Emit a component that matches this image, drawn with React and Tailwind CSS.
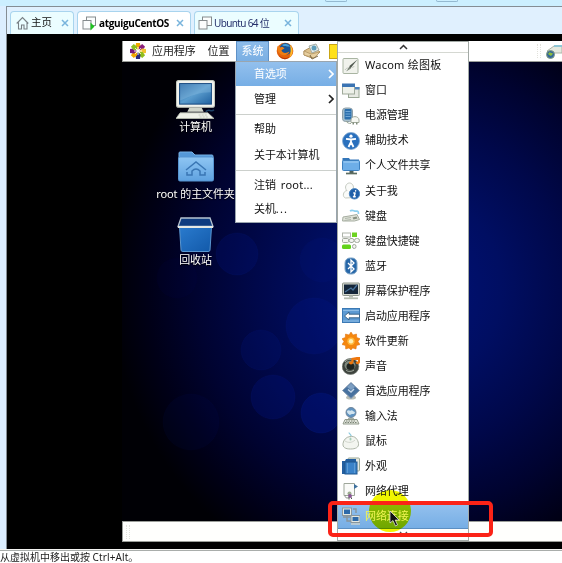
import React from "react";

const Svg = ({ children, w = 18, h = 18, className = "" }) => (
  <svg width={w} height={h} viewBox={`0 0 ${w} ${h}`} className={`shrink-0 ${className}`}>
    {children}
  </svg>
);

const icons = {
  wacom: (
    <>
      <rect x="1" y="1.500" width="15" height="15" rx="1" fill="#f0f2ec" stroke="#a9b5a2" />
      <path d="M3 13c2-3 3-1 5-3 2-1 3 2 4-1" fill="none" stroke="#bcc2b8" />
      <path d="M15.500 2.500 9.500 10 5.500 13.500 8 8.500z" fill="#4e574e" />
      <path d="M4 14.500 7.500 10l1.500 1.500z" fill="#7c867a" />
    </>
  ),
  windows: (
    <>
      <rect x="6.500" y="5.500" width="10.500" height="10" fill="#e6e9e2" stroke="#9aa794" />
      <rect x="12.500" y="5" width="5" height="2.500" fill="#4a82bd" />
      <rect x="0.500" y="2.500" width="12" height="9.500" fill="#eef1ea" stroke="#a0aa9b" />
      <rect x="0" y="1.500" width="13" height="3.500" fill="#3a73b2" />
    </>
  ),
  power: (
    <>
      <rect x="0.500" y="1" width="10" height="13.500" rx="3" fill="#a9c0cb" stroke="#8d9ea8" />
      <rect x="2.500" y="2" width="7" height="10.500" rx="1" fill="#2d70ad" />
      <path d="M3.500 4.500h5M3.500 7h5M3.500 9.500h5" stroke="#6fa6d5" />
      <path d="M9 15.500V13c0-4.500 8-4.500 8 0v2.500z" fill="#f5f7f2" stroke="#a3ab9d" />
      <path d="M10.500 16.500h1.500M14 16.500h1.500" stroke="#7f8b7a" strokeWidth="2" />
      <path d="M4 14c1 2 3 2.500 5 2.500" fill="none" stroke="#9aa795" />
    </>
  ),
  access: (
    <>
      <circle cx="9" cy="9" r="8.500" fill="#2a70bd" stroke="#7ea6cf" strokeWidth="0.800" />
      <circle cx="9" cy="4.200" r="1.600" fill="#fff" />
      <path d="M4 6.800 9 7.500l5-.7M9 7v4M9 10l-2.500 5M9 10l2.500 5" stroke="#fff" strokeWidth="1.800" fill="none" />
    </>
  ),
  share: (
    <>
      <path d="M0.500 1h6.500l1 1.500h9V12h-16.500z" fill="#3476b9" />
      <rect x="0.500" y="3.500" width="17" height="10" rx="1" fill="#6daee8" stroke="#3d80bf" />
      <path d="M1.500 5h15" stroke="#a8d2f5" />
      <path d="M7.500 14h4v2h-4z" fill="#4f625c" />
      <path d="M4 16.500h11" stroke="#5d6d61" strokeWidth="1.700" />
    </>
  ),
  about: (
    <>
      <path d="M3.500 16C0 15 1 9 5 8.500 2 6 4 1 7.500 1S13 6 10 8.500c3 1 4 4 3 7z" fill="#fafbf9" stroke="#c6cbc2" />
      <circle cx="12.500" cy="11.800" r="5.200" fill="#1f5fa9" stroke="#4a84bf" />
      <path d="M13.600 8.800v.100M13 11l-.8 3.700M11.800 11H13M11.500 14.700h1.700" stroke="#fff" strokeWidth="1.500" strokeLinecap="round" />
    </>
  ),
  keyboard: (
    <>
      <path d="M8 4c3-2 4 1 7 0 1 0 1.500 1 1.500 3" fill="none" stroke="#8cd0f0" strokeWidth="1.700" />
      <path d="m1 10 5-.8 9-1.700 2.500 5-5 1.500H.5z" fill="#e0e4da" stroke="#a6ada0" />
      <path d="m3 11.500 6-1M2.500 13.500 9 12.500" stroke="#b0b7ab" />
      <path d="m10.500 10.500 4-1 1 2-4 1z" fill="#879082" />
    </>
  ),
  shortcuts: (
    <>
      <rect x="0.500" y="1" width="8" height="4" fill="#fff" stroke="#aeb4aa" />
      <rect x="10" y="0.500" width="5" height="4.500" fill="#6dd321" />
      <rect x="0.500" y="6.500" width="6" height="4" rx="1" fill="#f3f4f1" stroke="#a2a99c" />
      <rect x="7" y="6.500" width="5" height="4" rx="2" fill="#f3f4f1" stroke="#a2a99c" />
      <rect x="12.500" y="6.500" width="5" height="4" rx="2" fill="#f3f4f1" stroke="#a2a99c" />
      <rect x="0" y="12.500" width="9" height="4.500" rx="1.500" fill="#62d31b" />
      <rect x="10.500" y="12.500" width="3.500" height="4" rx="1.700" fill="#f3f4f1" stroke="#a2a99c" />
    </>
  ),
  bluetooth: (
    <>
      <rect x="3" y="1" width="12" height="16" rx="5" fill="#2767a8" stroke="#7fa6c9" />
      <path d="m6 6 6 6-3 3V3l3 3-6 6" fill="none" stroke="#fff" strokeWidth="1.300" />
    </>
  ),
  screensaver: (
    <>
      <rect x="0.500" y="1" width="17" height="12.500" rx="1" fill="#d3d7cf" stroke="#8f968c" />
      <rect x="2" y="2.500" width="14" height="9.500" fill="#152639" />
      <path d="m3 10 6-4 2 2 4-5" fill="none" stroke="#47729b" strokeWidth="1.300" />
      <path d="M7 13.500h4v2H7z" fill="#b7bdb2" />
      <path d="M2 16.300h14" stroke="#b6bdb1" strokeWidth="1.800" />
    </>
  ),
  startup: (
    <>
      <rect x="0.500" y="1.500" width="17" height="14" fill="#5c9ad3" stroke="#3b79b4" />
      <path d="M1 3.500h16M1 14h16" stroke="#8dbce5" />
      <path d="M2.500 9 7 5v2.200h10.500v3.600H7V13z" fill="#fff" stroke="#315b80" strokeWidth="0.900" />
    </>
  ),
  update: (
    <>
      <path d="m9 0 2 3 3.500-1 .2 3.500 3.300 1.200L16 9.500l2 3-3.500 1L14 17l-3.300-1L9 18l-2-2-3.300 1-.2-3.500L0 12.500l2-3-2-2.800 3.300-1.200L3.500 2 7 3z" fill="#f5880f" stroke="#dd6d08" strokeWidth="0.500" />
      <circle cx="9" cy="9.300" r="3.700" fill="#ffb83c" />
      <circle cx="9" cy="9.300" r="2.200" fill="#fff0b4" />
    </>
  ),
  sound: (
    <>
      <ellipse cx="8.500" cy="9.500" rx="8.300" ry="8" fill="#3d423d" stroke="#757c74" strokeWidth="0.700" />
      <ellipse cx="8" cy="8.500" rx="5.500" ry="4.800" fill="#7d877c" />
      <ellipse cx="8.500" cy="9.500" rx="4" ry="3.600" fill="#1f2420" />
      <path d="M3 5c2-3 5-3 7-2M4 13c2 2 5 2 8 0" fill="none" stroke="#a5aea2" />
      <path d="M10.500 5.500V2L17 .7v5" fill="none" stroke="#ee760c" strokeWidth="2.200" />
      <ellipse cx="9" cy="6" rx="2" ry="1.400" fill="#ee760c" />
      <ellipse cx="15.700" cy="5.800" rx="2" ry="1.400" fill="#ee760c" />
    </>
  ),
  preferred: (
    <>
      <ellipse cx="9" cy="15.500" rx="5" ry="2" fill="#b8bdb6" />
      <path d="M9 .5 17.500 8.500 9 16.500.5 8.500z" fill="#47719f" stroke="#8b9eb4" />
      <path d="m5 5 4-3.500L13 5 9 8z" fill="#7d9fc2" />
      <path d="m6 7.500 3 2.500 3-3" fill="none" stroke="#c3d5e8" strokeWidth="1.500" />
    </>
  ),
  input: (
    <>
      <circle cx="9" cy="5.500" r="5" fill="#5f93c1" stroke="#72879b" />
      <path d="M5 4c2-2 3 1 5-1 1 2 3 1 3 3-2 2-3 0-5 2-1-1-3-1-3-4z" fill="#d1e4ef" />
      <path d="M6 11h6v2H6z" fill="#a6b1a9" />
      <path d="M3 12.500h12l2 4.500H1z" fill="#e2e5dc" stroke="#929b8d" />
      <path d="M4 14h10M3 15.500h12" stroke="#7a8477" strokeDasharray="1.500 1" />
    </>
  ),
  mouse: (
    <>
      <path d="M7 0.500c0 2 3 1 2 5" fill="none" stroke="#8bcbe0" strokeWidth="1.200" />
      <path d="M8 4.500c5-1 8 3 8.500 7 .5 4-3 5.500-8 5.500S.5 15.500 1 11.500C1.500 8 4 5 8 4.500z" fill="#f3f5f0" stroke="#aeb6a8" />
      <path d="M3 9c3 2 7 2 10-1" fill="none" stroke="#d1d5cd" />
      <ellipse cx="8.500" cy="7" rx="1" ry="1.500" fill="#a5cdb9" />
    </>
  ),
  appearance: (
    <>
      <rect x="6" y="1" width="11.500" height="13" rx="1" fill="#e5e8e1" stroke="#9aa795" />
      <path d="M0 4h3l1-2h10v3H4v12H0z" fill="#235e9f" />
      <rect x="3" y="5" width="12" height="12" fill="#3a82c9" stroke="#1f568f" />
      <path d="M5.500 6v10M12.500 6v10" stroke="#5e9bd4" />
    </>
  ),
  proxy: (
    <>
      <path d="M2 1.500h10.500v12H2z" fill="#fafbf9" stroke="#9fa79b" />
      <path d="M12 2 16 4.500 12 7z" fill="#3e719e" />
      <path d="M4 13c-3 3 3 4 3 2" fill="none" stroke="#8c9489" />
      <circle cx="7.500" cy="11.500" r="2" fill="#9dad92" />
      <circle cx="8" cy="14" r="1.900" fill="#8a5596" />
      <path d="M7 15.500v2M9.500 15.500v1.500" stroke="#535a51" />
    </>
  ),
  network: (
    <>
      <rect x="0.500" y="1" width="9" height="7.500" fill="#e3e8e2" stroke="#8a969c" />
      <rect x="2" y="2.500" width="6" height="4.500" fill="#2e6aa9" />
      <path d="M1 10h8M5 9v5h4M11 2h3v4" fill="none" stroke="#88949a" strokeWidth="1.400" />
      <rect x="9" y="8.500" width="9" height="7" fill="#e3e8e2" stroke="#8a969c" />
      <rect x="10.500" y="10" width="6" height="4" fill="#2e6aa9" />
      <path d="M9 17h9" stroke="#c9d0ce" strokeWidth="1.500" />
    </>
  ),
};

const prefs = [
  ["wacom", "Wacom 绘图板"],
  ["windows", "窗口"],
  ["power", "电源管理"],
  ["access", "辅助技术"],
  ["share", "个人文件共享"],
  ["about", "关于我"],
  ["keyboard", "键盘"],
  ["shortcuts", "键盘快捷键"],
  ["bluetooth", "蓝牙"],
  ["screensaver", "屏幕保护程序"],
  ["startup", "启动应用程序"],
  ["update", "软件更新"],
  ["sound", "声音"],
  ["preferred", "首选应用程序"],
  ["input", "输入法"],
  ["mouse", "鼠标"],
  ["appearance", "外观"],
  ["proxy", "网络代理"],
  ["network", "网络连接"],
];

const VmIcon = ({ running }) => (
  <Svg w={15} h={15}>
    <rect x="4.500" y="1" width="9" height="8.500" fill="#fbfdfd" stroke="#858b8d" />
    <rect x="1" y="4.500" width="8" height="8.500" fill="#fbfdfd" stroke="#858b8d" />
    {running && <path d="M8.500 6.500v8l4-4z" fill="#1fc31f" />}
  </Svg>
);

const TabClose = ({ className = "" }) => (
  <Svg w={8} h={8} className={className}>
    <path d="m1 1 6 6M7 1 1 7" stroke="#78b4dc" strokeWidth="1.500" />
  </Svg>
);

const petals = [
  ["#f2a900", 0],
  ["#8a1f7c", 45],
  ["#f2c230", 90],
  ["#8fbe1d", 135],
  ["#2b2a7c", 180],
  ["#f2a900", 225],
  ["#7a1a7c", 270],
  ["#8fbe1d", 315],
];

const Gnome = () => (
  <Svg w={18} h={18}>
    {petals.map(([c, a]) => (
      <path key={a} d="M9 8 6.500 5 7 1h4l.5 4z" fill={c} transform={`rotate(${a} 9 9)`} />
    ))}
    <path d="M9 5v8M5 9h8M6.200 6.200l5.600 5.600M11.800 6.200l-5.600 5.600" stroke="#fff" strokeWidth="0.900" />
  </Svg>
);

const Firefox = () => (
  <Svg w={18} h={18}>
    <circle cx="9" cy="9" r="8.300" fill="#e4630c" />
    <circle cx="9.500" cy="7" r="6" fill="#1c5595" />
    <path d="M6 3c3-2 7-1 8 2-2-1-3 0-4-1-2 0-3 0-4-1z" fill="#4ba2da" />
    <path d="M1.500 4c1 0 2 1 3 1.500 2-1 3 0 4 1-1 1-3 1-3 2 1 3 5 3 8 1-1 3-4 4.500-7 3.500C3 12 .5 8 1.500 4z" fill="#ef7e13" />
    <path d="M14 3c4 4 3 10-1 13 2-4 2-8 1-13z" fill="#ffbe2a" />
    <path d="M2 12c3 5 9 5 12 2-2 4-9 5-12-2z" fill="#b83808" />
  </Svg>
);

const Mail = () => (
  <Svg w={20} h={17}>
    <path d="m2 8 9-5 7 6-8 6-8-3z" fill="#ddc18b" stroke="#ad8f5d" />
    <path d="m7 3 7-2 3 6-7 3z" fill="#e8ede9" stroke="#a3aaa3" />
    <circle cx="12" cy="5" r="2.500" fill="#5f9dba" />
    <path d="m2 8 7 3 9-2-6 6-10-3z" fill="#e7cf9f" stroke="#b39664" strokeWidth="0.800" />
    <path d="m8 12 2 4 6-3" fill="none" stroke="#7b6642" />
  </Svg>
);

const Computer = () => (
  <svg width="39" height="39" viewBox="0 0 38 38" preserveAspectRatio="none" className="shrink-0">
    <defs>
      <linearGradient id="scr" x1="0" y1="0" x2="1" y2="1">
        <stop offset="0" stopColor="#1d5c9c" />
        <stop offset="0.500" stopColor="#5b9dce" />
        <stop offset="1" stopColor="#1f609f" />
      </linearGradient>
    </defs>
    <rect x="0.500" y="0.500" width="37" height="26" rx="2" fill="#f2f3ee" stroke="#c3c8bd" />
    <rect x="3.500" y="3.500" width="31" height="20" fill="url(#scr)" stroke="#1a4b80" />
    <path d="M4 4h30v8c-12 0-18 3-30 8z" fill="#8fc0e3" opacity="0.350" />
    <path d="M13 27h12l2 4H11z" fill="#d2d6cb" />
    <path d="M4 32h27l6 5.500H0z" fill="#eff1e9" stroke="#b8beb0" strokeWidth="0.800" />
    <path d="M22 34h8M23 36h8" stroke="#c6cbbf" strokeDasharray="2 1" />
    <path d="M29 31c3-4 5 1 8-2" fill="none" stroke="#1d4166" strokeWidth="1.500" />
  </svg>
);

const Home = () => (
  <svg width="36" height="31" viewBox="0 0 36 31" className="shrink-0">
    <defs>
      <linearGradient id="fold" x1="0" y1="0" x2="0" y2="1">
        <stop offset="0" stopColor="#8fc6f3" />
        <stop offset="1" stopColor="#5fa2e0" />
      </linearGradient>
    </defs>
    <path d="M1 7V2q0-1 1-1h12l3 3h17q1 0 1 1v6H1z" fill="#5598d8" stroke="#77b1e5" />
    <rect x="0.500" y="6" width="35" height="24" rx="1.500" fill="url(#fold)" stroke="#5795d2" />
    <path d="m8 19 10-8 10 8M9 21v3h5v-4q4-4 8 0v4h5v-3" fill="none" stroke="#3a76b4" strokeWidth="1.500" />
  </svg>
);

const Trash = () => (
  <svg width="37" height="35" viewBox="0 0 37 35" className="shrink-0">
    <defs>
      <linearGradient id="bin" x1="0" y1="0" x2="1" y2="1">
        <stop offset="0" stopColor="#2a7bce" />
        <stop offset="1" stopColor="#1259a9" />
      </linearGradient>
    </defs>
    <path d="m2.500 10 1.500 23q0 1.500 2 1.500h25q2 0 2-1.500L34.500 10z" fill="url(#bin)" stroke="#5a96cf" />
    <path d="M4 1h29l3 8.500H1z" fill="#0e3c80" stroke="#b5c3cf" strokeWidth="1.300" />
    <path d="M1 10h35" stroke="#e6e9e4" strokeWidth="2.200" />
  </svg>
);

const DesktopItem = ({ icon, label, className, gap = "" }) => (
  <div className={`flex w-[100px] flex-col items-center ${className}`}>
    {icon}
    <span className={`whitespace-nowrap text-[11px] leading-4 tracking-[-0.1px] text-white [text-shadow:0_1px_1px_#000] ${gap}`}>{label}</span>
  </div>
);

const bokeh = [
  [115, 192, 21, 0.35],
  [139, 288, 20, 0.3],
  [151, 335, 22, 0.4],
  [199, 351, 20, 0.6],
  [192, 264, 28, 0.4],
  [200, 198, 22, 0.25],
  [69, 360, 28, 0.12],
  [55, 216, 20, 0.08],
];

const Wallpaper = () => (
  <svg width="440" height="458" viewBox="0 0 440 458" className="absolute left-0 top-0">
    {bokeh.map(([x, y, r, o]) => (
      <circle key={`${x}-${y}`} cx={x} cy={y} r={r} fill="#00188a" fillOpacity={o * 0.65} stroke="#0a2080" strokeOpacity={o * 0.4} />
    ))}
  </svg>
);

const Chevron = ({ color }) => (
  <Svg w={6} h={10}>
    <path d="m1 1 4 4-4 4" fill="none" stroke={color} strokeWidth="1.700" />
  </Svg>
);

const SystemMenu = () => (
  <div className="absolute left-[113px] top-5 flex h-[162px] w-[102px] flex-col border border-[#9aa5ae] bg-white text-[11px] tracking-[-0.1px] text-[#111]">
    <div className="flex h-[24px] shrink-0 items-center justify-between bg-linear-to-b from-[#93c0ed] to-[#76aee5] pl-[18px] pr-[2px] text-white">
      <span>首选项</span>
      <Chevron color="#fff" />
    </div>
    <div className="flex h-[26px] shrink-0 items-center justify-between pl-[18px] pr-[2px]">
      <span>管理</span>
      <Chevron color="#222" />
    </div>
    <div className="mb-[2px] mt-[2px] h-px shrink-0 bg-[#ccd0cc]" />
    <div className="flex h-[25px] shrink-0 items-center pl-[18px]">帮助</div>
    <div className="flex h-[26px] shrink-0 items-center pl-[18px]">关于本计算机</div>
    <div className="mb-[2px] mt-[2px] h-px shrink-0 bg-[#ccd0cc]" />
    <div className="flex h-[24px] shrink-0 items-center whitespace-pre pl-[18px]">
      注销<span className="pl-[5px] tracking-[0.250px]">root...</span>
    </div>
    <div className="flex h-[25px] shrink-0 items-center pl-[18px]">
      关机<span className="tracking-[1.200px]">...</span>
    </div>
  </div>
);

const PreferencesMenu = () => (
  <div className="absolute left-[215px] top-0 flex h-[500px] w-[132px] flex-col border border-[#a3aaa6] bg-white">
    <div className="flex h-[11px] items-center justify-center border-b border-[#d5d8d2]">
      <Svg w={9} h={6}>
        <path d="m1 5 3.500-3.500L8 5" fill="none" stroke="#333" strokeWidth="1.500" />
      </Svg>
    </div>
    {prefs.map(([id, label]) => (
      <div
        key={id}
        className={`flex h-[25.050px] shrink-0 items-center gap-[5px] pl-1 text-[11px] ${
          id === "wacom" ? "tracking-[0.250px]" : "tracking-[-0.1px]"
        } ${
          id === "network"
            ? "border-y border-[#5b8fc3] bg-linear-to-b from-[#93c0ed] to-[#76aee5] text-white"
            : "text-[#111]"
        }`}
      >
        <Svg>{icons[id]}</Svg>
        <span className={id === "network" ? "relative z-30 text-[#f2f554]" : "relative z-30 whitespace-nowrap"}>{label}</span>
      </div>
    ))}
    <div className="flex h-[10px] items-center justify-center">
      <Svg w={9} h={6}>
        <path d="m1 1 3.500 3.500L8 1" fill="none" stroke="#555" strokeWidth="1.300" />
      </Svg>
    </div>
  </div>
);

export default function App() {
  return (
    <div className="relative flex h-[563px] w-[562px] flex-col overflow-hidden bg-white font-['Noto_Sans','Noto_Sans_CJK_SC',sans-serif]">
      <div className="flex h-[6px] shrink-0 items-start bg-[#ccefff]">
        <div className="ml-[325px] h-[2px] w-[22px] rounded-b-sm border border-t-0 border-[#94b9d1]" />
        <div className="ml-[89px] h-[2px] w-[22px] rounded-b-sm border border-t-0 border-[#94b9d1]" />
      </div>
      <div className="flex h-[543px] shrink-0">
        <div className="w-[6px] shrink-0 bg-[#dceeff]" />
        <div className="flex grow flex-col border-l border-t border-[#858d94]">
          <div className="flex h-[27px] shrink-0 items-end gap-[3px] bg-[#e0f0fe] pl-[3px]">
            <div className="flex h-[23px] w-[64px] items-center rounded-t-sm border border-b-0 border-[#a9d4ee] bg-[#ebfdff] pl-[5px] text-[10.500px] text-[#111]">
              <Svg w={13} h={14}>
                <path d="M.7 7.500 6.500 1.500l5.800 6M2.500 6.500V13h3V9h2.500v4h3V6.500" fill="none" stroke="#777f84" strokeWidth="1.100" />
              </Svg>
              <span className="ml-[2px]">主页</span>
              <TabClose className="ml-[9px]" />
            </div>
            <div className="flex h-[23px] w-[114px] items-center rounded-t-sm border border-b-0 border-[#a9d4ee] bg-white pl-[4px]">
              <VmIcon running />
              <span className="ml-[2px] w-[72px] whitespace-nowrap font-['Open_Sans','Noto_Sans',sans-serif] text-[10px] font-bold tracking-[-0.350px] text-black">
                atguiguCentOS
              </span>
              <TabClose className="ml-[5px]" />
            </div>
            <div className="flex h-[23px] w-[105px] items-center rounded-t-sm border border-b-0 border-[#a9d4ee] bg-[#ebfdff] pl-[3px]">
              <VmIcon />
              <span className="ml-[1px] w-[56px] whitespace-nowrap text-[10px] tracking-[-0.650px] text-[#25306b]">Ubuntu 64 位</span>
              <TabClose className="ml-[14px]" />
            </div>
          </div>
          <div className="flex grow bg-black pb-[7px] pt-[7px]">
            <div className="w-[115px] shrink-0" />
            <div className="relative flex grow flex-col">
              <div className="flex h-[21px] shrink-0 items-center border-b border-l border-[#9b9e99] bg-white text-[11px] text-[#222]">
                <div className="flex w-[113px] shrink-0 items-center pl-[6px]">
                  <Gnome />
                  <span className="ml-[5px] tracking-[-0.1px]">应用程序</span>
                  <span className="ml-[12px]">位置</span>
                </div>
                <div className="flex h-full w-[33px] shrink-0 items-center justify-center border border-b-0 border-[#5e91c7] bg-linear-to-b from-[#8dbcea] to-[#7aafe3] text-white">系统</div>
                <div className="ml-[7px]"><Firefox /></div>
                <div className="ml-[8px]"><Mail /></div>
                <div className="ml-[7px] h-[15px] w-[12px] border border-[#c9a514] bg-[#ffe11b]" />
                <div className="ml-auto flex items-center gap-[5px]">
                  <div className="h-[14px] w-[4px] border-x border-dotted border-[#e2e2dc]" />
                  <Svg w={16} h={18}>
                    <path d="M1 9 8 4h8v7H3z" fill="#e4e9df" stroke="#adb5a8" />
                    <path d="M8 4h8" stroke="#8fc6d5" strokeWidth="2" />
                    <circle cx="4.500" cy="12.500" r="4" fill="#31669b" stroke="#849d83" />
                    <path d="M2 12c2-4 3 0 5-1-1 3-2 4-5 1z" fill="#8cbc3d" />
                  </Svg>
                </div>
              </div>
              <div className="relative grow bg-[radial-gradient(ellipse_300px_310px_at_290px_225px,#00127a_0%,#000e62_30%,#00084a_52%,#000330_72%,#000017_88%,#000005_100%)]">
                <Wallpaper />
                <div className="relative flex w-[147px] flex-col items-center">
                  <DesktopItem className="h-[71px] pt-[18px]" icon={<Computer />} label="计算机" />
                  <DesktopItem className="h-[66px] pt-[18px]" icon={<Home />} label="root 的主文件夹" gap="mt-[4px]" />
                  <DesktopItem className="pt-[18px]" icon={<Trash />} label="回收站" />
                </div>
              </div>
              <div className="flex h-[21px] shrink-0 items-center border border-r-0 border-[#9b9e99] bg-[#fffffd] pl-[3px]">
                <div className="h-[14px] w-[4px] border-x border-dotted border-[#e2e2dc]" />
              </div>
              <SystemMenu />
              <PreferencesMenu />
            </div>
          </div>
        </div>
      </div>
      <div className="flex grow flex-col bg-[#f4f4f2]">
        <div className="mt-px h-px shrink-0 bg-[#a9adab]" />
        <div className="h-[12px] whitespace-nowrap bg-white pt-[1px] text-[10px] leading-[11px] text-[#222]">
          从虚拟机中移出或按 <span className="tracking-[0.1px]">Ctrl+Alt。</span>
        </div>
      </div>
      <div className="absolute left-[369px] top-[490px] z-20 h-[42px] w-[42px] rounded-full bg-[#f0f500] mix-blend-multiply" />
      <div className="absolute left-[328px] top-[501px] z-40 h-[36px] w-[165px] rounded-[5px] border-4 border-[#fb2317]" />
      <svg width="12" height="17" viewBox="0 0 12 17" className="absolute left-[389px] top-[510px] z-50">
        <path d="M1 1v12l3-2.500L6.500 16l2-1-2.300-5H10z" fill="#111" stroke="#eee" strokeWidth="0.700" />
      </svg>
    </div>
  );
}
